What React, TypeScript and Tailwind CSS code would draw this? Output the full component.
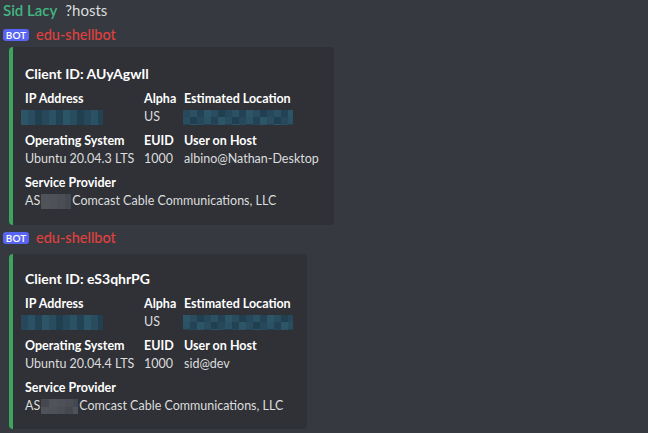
import React from "react";

const blueShades = ["#27485a", "#2b5164", "#234254", "#2d5568", "#294c5f", "#21404f"];
const grayShades = ["#4b4e54", "#45484e", "#505359", "#4e5157"];

function Mosaic({ w, h, shades, cell = 7, seed = 1 }: { w: number; h: number; shades: string[]; cell?: number; seed?: number }) {
  const rects: React.ReactElement[] = [];
  let s = seed * 9301 + 49297;
  const cols = Math.ceil(w / cell);
  const rows = Math.ceil(h / cell);
  for (let r = 0; r < rows; r++) {
    for (let c = 0; c < cols; c++) {
      s = (s * 9301 + 49297) % 233280;
      const col = shades[s % shades.length];
      rects.push(<rect key={r + "-" + c} x={c * cell} y={r * cell} width={cell} height={cell} fill={col} />);
    }
  }
  return (
    <svg width={w} height={h} className="block">
      {rects}
    </svg>
  );
}

function BotLine() {
  return (
    <div className="flex items-center h-[20px] pl-[3px]">
      <span className="bg-[#5865f2] text-white text-[10px] font-semibold rounded-[3px] h-[12px] w-[26px] flex items-center justify-center leading-none">BOT</span>
      <span className="ml-[7px] text-[#e0413e] text-[14.5px] font-medium leading-none">edu-shellbot</span>
    </div>
  );
}

function Field({ label, children }: { label: string; children: React.ReactNode }) {
  return (
    <div className="flex flex-col">
      <div className="text-white font-bold text-[12.5px] leading-[18px] whitespace-nowrap">{label}</div>
      <div className="text-[#dcddde] text-[12.5px] leading-[18px] whitespace-nowrap h-[18px] flex items-center">{children}</div>
    </div>
  );
}

function Embed({ id, os, user, width, pt, pb, ipSeed, locW, asW }: { id: string; os: string; user: string; width: number; pt: string; pb: string; ipSeed: number; locW: number; asW: number }) {
  return (
    <div className="ml-[9px] flex rounded-[4px] overflow-hidden bg-[#2f3136]" style={{ width }}>
      <div className="w-[4px] bg-[#3ba55d] shrink-0" />
      <div className={"pl-[12px] pr-[12px] " + pt + " " + pb}>
        <div className="text-white font-bold text-[14px] leading-[20px] mb-[6px]">Client ID: {id}</div>
        <div className="grid grid-cols-[119px_40px_auto] gap-y-[6px]">
          <Field label="IP Address">
            <div className="-ml-[4px]"><Mosaic w={82} h={15} shades={blueShades} seed={ipSeed} /></div>
          </Field>
          <Field label="Alpha">US</Field>
          <Field label="Estimated Location">
            <div className="-ml-[1px]"><Mosaic w={locW} h={15} shades={blueShades} seed={ipSeed + 3} /></div>
          </Field>
          <Field label="Operating System">{os}</Field>
          <Field label="EUID">1000</Field>
          <Field label="User on Host">{user}</Field>
          <div className="col-span-3">
            <Field label="Service Provider">
              <span>AS</span>
              <span className="inline-block mx-[1px]"><Mosaic w={asW} h={15} shades={grayShades} cell={8} seed={ipSeed + 7} /></span>
              <span>Comcast Cable Communications, LLC</span>
            </Field>
          </div>
        </div>
      </div>
    </div>
  );
}

export default function App() {
  return (
    <div className="w-[648px] h-[433px] bg-[#36393f] overflow-hidden" style={{ fontFamily: "Lato, 'Noto Sans', sans-serif" }}>
      <div className="flex items-center h-[20px] pl-[3px] text-[15px] leading-none">
        <span className="text-[#43b581] font-semibold">Sid Lacy</span>
        <span className="ml-[8px] text-[#dcddde]">?hosts</span>
      </div>
      <div className="mt-[5px]"><BotLine /></div>
      <div className="mt-[2px]">
        <Embed id="AUyAgwIl" os="Ubuntu 20.04.3 LTS" user="albino@Nathan-Desktop" width={325} pt="pt-[17px]" pb="pb-[15px]" ipSeed={1} locW={110} asW={30} />
      </div>
      <div className="mt-[3px]"><BotLine /></div>
      <div className="mt-[6px]">
        <Embed id="eS3qhrPG" os="Ubuntu 20.04.4 LTS" user="sid@dev" width={298} pt="pt-[15px]" pb="pb-[14px]" ipSeed={4} locW={110} asW={37} />
      </div>
    </div>
  );
}
